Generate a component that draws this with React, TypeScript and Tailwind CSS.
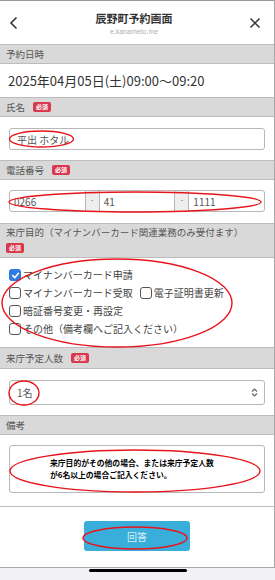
import React from "react";

const font = { fontFamily: '"Noto Sans CJK JP", "Noto Sans", sans-serif' };

function Badge() {
  return (
    <span className="ml-[8px] inline-flex h-[10px] items-center rounded-[2px] bg-[#d8384d] px-[3px] text-[6px] font-bold leading-none text-white">
      必須
    </span>
  );
}

function SectionHeader({ children, h = "h-[20px]" }: { children: React.ReactNode; h?: string }) {
  return (
    <div className={`flex ${h} items-center border-y border-[#bcbcbc] bg-[#d9d9d9] px-[6px] text-[9.5px] text-[#555]`}>
      {children}
    </div>
  );
}

function Check({ checked, label }: { checked?: boolean; label: string }) {
  return (
    <div className="flex items-center">
      {checked ? (
        <span className="flex h-[12px] w-[12px] items-center justify-center rounded-[3px] bg-[#2f7de1]">
          <svg width="9" height="9" viewBox="0 0 10 10">
            <path d="M2 5.2 L4.2 7.4 L8.2 2.6" stroke="white" strokeWidth="1.8" fill="none" strokeLinecap="round" strokeLinejoin="round" />
          </svg>
        </span>
      ) : (
        <span className="h-[12px] w-[12px] rounded-[3px] border border-[#555] bg-white" />
      )}
      <span className="ml-[2px] text-[10px] leading-none text-[#444]">{label}</span>
    </div>
  );
}

export default function App() {
  return (
    <div className="relative h-[580px] w-[275px] overflow-hidden bg-[#f1f1f6]" style={font}>
      <div className="flex h-[568px] flex-col border-b border-r border-[#a8a8a8] bg-white">
        {/* Top bar */}
        <div className="flex h-[44px] items-center justify-between border-t border-[#999] px-[8px]">
          <svg width="12" height="14" viewBox="0 0 12 14">
            <path d="M8.5 1.5 L3 7 L8.5 12.5" stroke="#333" strokeWidth="1.6" fill="none" />
          </svg>
          <div className="flex flex-col items-center pt-[2px]">
            <span className="text-[11px] font-bold leading-none text-[#333]">辰野町予約画面</span>
            <span className="mt-[4px] text-[7px] leading-none text-[#b0b0b0]" style={{ fontFamily: '"Liberation Sans", sans-serif' }}>
              e.kanameto.me
            </span>
          </div>
          <svg width="14" height="14" viewBox="0 0 14 14" className="mr-[4px]">
            <path d="M2.5 2.5 L11.5 11.5 M11.5 2.5 L2.5 11.5" stroke="#333" strokeWidth="1.5" />
          </svg>
        </div>

        <SectionHeader>予約日時</SectionHeader>
        <div className="flex h-[33px] items-center px-[8px] text-[13px] text-[#333]">
          2025年04月05日(土)09:00～09:20
        </div>

        <SectionHeader>
          氏名
          <Badge />
        </SectionHeader>
        <div className="px-[9px] pb-[10px] pt-[11px]">
          <div className="flex h-[22px] items-center rounded-[3px] border border-[#b8b8b8] px-[7px] text-[10px] text-[#555]">
            平出 ホタル
          </div>
        </div>

        <SectionHeader>
          電話番号
          <Badge />
        </SectionHeader>
        <div className="px-[9px] pb-[11px] pt-[10px]">
          <div className="flex h-[22px] items-stretch text-[10px] text-[#555]">
            <div className="flex flex-1 items-center rounded-l-[3px] border border-[#b8b8b8] pl-[4px]">0266</div>
            <div className="flex w-[13px] items-start justify-center border-y border-[#b8b8b8] bg-[#eee] pt-[3px] text-[7px]">-</div>
            <div className="flex flex-1 items-center border border-[#b8b8b8] pl-[4px]">41</div>
            <div className="flex w-[13px] items-start justify-center border-y border-[#b8b8b8] bg-[#eee] pt-[3px] text-[7px]">-</div>
            <div className="flex flex-1 items-center rounded-r-[3px] border border-[#b8b8b8] pl-[4px]">1111</div>
          </div>
        </div>

        <div className="flex h-[35px] flex-col justify-center border-y border-[#bcbcbc] bg-[#d9d9d9] px-[6px] text-[9.5px] leading-none text-[#555]">
          <span>来庁目的（マイナンバーカード関連業務のみ受付ます）</span>
          <span className="mt-[4px]">
            <span className="inline-flex h-[10px] items-center rounded-[2px] bg-[#d8384d] px-[3px] text-[6px] font-bold leading-none text-white">
              必須
            </span>
          </span>
        </div>
        <div className="flex h-[89px] flex-col gap-[6px] px-[9px] pt-[11px]">
          <Check checked label="マイナンバーカード申請" />
          <div className="flex items-center gap-[7px]">
            <Check label="マイナンバーカード受取" />
            <Check label="電子証明書更新" />
          </div>
          <Check label="暗証番号変更・再設定" />
          <Check label="その他（備考欄へご記入ください）" />
        </div>

        <SectionHeader h="h-[22px]">
          来庁予定人数
          <Badge />
        </SectionHeader>
        <div className="px-[9px] pb-[10px] pt-[11px]">
          <div className="flex h-[25px] items-center justify-between rounded-[3px] border border-[#b8b8b8] pl-[7px] pr-[6px] text-[10px] text-[#555]">
            <span>1名</span>
            <svg width="7" height="9" viewBox="0 0 7 9">
              <path d="M1 3.5 L3.5 1 L6 3.5 M1 5.5 L3.5 8 L6 5.5" stroke="#666" strokeWidth="1.2" fill="none" />
            </svg>
          </div>
        </div>

        <SectionHeader>備考</SectionHeader>
        <div className="border-b border-[#bcbcbc] px-[9px] pb-[13px] pt-[10px]">
          <div className="flex h-[48px] flex-col items-start justify-center rounded-[3px] border border-[#b8b8b8] pl-[40px] text-[7.8px] font-bold leading-[12px] text-black">
            <span>来庁目的がその他の場合、または来庁予定人数</span>
            <span>が6名以上の場合ご記入ください。</span>
          </div>
        </div>

        <div className="flex flex-1 items-start justify-center pt-[14px]">
          <div className="flex h-[30px] w-[106px] items-center justify-center rounded-[3px] bg-[#3aaedb] text-[10px] text-[#d7eef8]">
            回答
          </div>
        </div>
      </div>
      <div className="flex justify-center pt-[1px]">
        <div className="h-[3px] w-[98px] rounded-full bg-black" />
      </div>

      <svg className="pointer-events-none absolute left-0 top-0" width="275" height="580">
        <g stroke="#e8141b" strokeWidth="1.4" fill="none">
          <ellipse cx="41.5" cy="139" rx="32" ry="8" />
          <ellipse cx="135" cy="202" rx="126" ry="10" />
          <ellipse cx="117" cy="303" rx="115" ry="44" />
          <ellipse cx="24" cy="393" rx="15" ry="12" />
          <ellipse cx="135" cy="471" rx="125" ry="21" />
          <ellipse cx="135" cy="538" rx="52" ry="11" />
        </g>
      </svg>
    </div>
  );
}
